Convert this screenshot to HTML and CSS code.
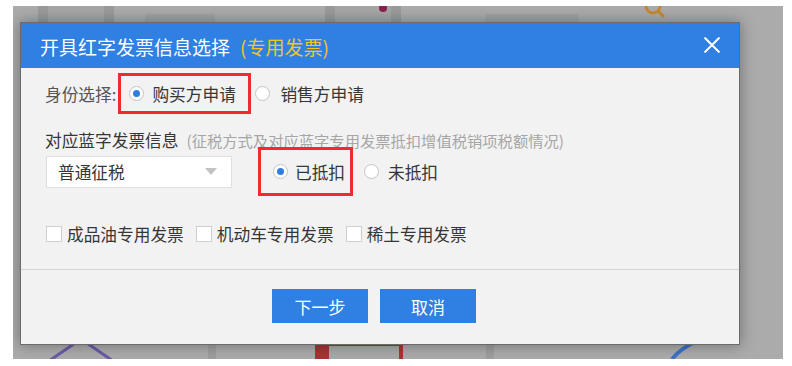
FILE: index.html
```html
<!DOCTYPE html>
<html lang="zh-CN">
<head>
<meta charset="utf-8">
<title>开具红字发票信息选择</title>
<link rel="stylesheet" href="styles.css">
</head>
<body>
<div class="backdrop">
  <div class="deco deco-card1"></div>
  <div class="deco deco-card2"><span class="deco-dot"></span></div>
  <div class="deco deco-shade1"></div>
  <div class="deco deco-shade2"></div>
  <div class="deco deco-bar1"></div>
  <div class="deco deco-bar2"></div>
  <div class="deco deco-red"><div class="deco-red-inner"></div></div>
  <svg class="deco deco-tri" width="80" height="20" viewBox="0 0 80 20"><path d="M8 20 L40 -2 L72 20" fill="none" stroke="#6a5aa8" stroke-width="3"/></svg>
  <svg class="deco deco-arrow" width="40" height="20" viewBox="0 0 40 20"><path d="M4 20 Q14 8 30 2" fill="none" stroke="#3a72c8" stroke-width="4"/></svg>
  <svg class="deco deco-q" width="30" height="18" viewBox="0 0 30 18"><circle cx="12" cy="2" r="7" fill="none" stroke="#c68a2c" stroke-width="3"/><path d="M17 7 L23 13" stroke="#c68a2c" stroke-width="3"/></svg>

  <div class="dialog">
    <div class="titlebar">
      <span class="title">开具红字发票信息选择<span class="title-sub">(专用发票)</span></span>
      <svg class="close" width="18" height="16" viewBox="0 0 18 16"><path d="M1.5 0.5 L16.5 15.5 M16.5 0.5 L1.5 15.5" stroke="#ffffff" stroke-width="2"/></svg>
    </div>
    <div class="content">
      <div class="row row-identity">
        <span class="label">身份选择:</span>
        <span class="highlight hl-buyer">
          <span class="radio checked"></span>
          <span class="opt-text">购买方申请</span>
        </span>
        <span class="radio radio-seller"></span>
        <span class="opt-text">销售方申请</span>
      </div>
      <div class="row row-info">
        <span class="info-title">对应蓝字发票信息</span>
        <span class="info-hint">(征税方式及对应蓝字专用发票抵扣增值税销项税额情况)</span>
      </div>
      <div class="row row-tax">
        <div class="select">
          <span>普通征税</span>
          <span class="caret"></span>
        </div>
        <span class="highlight hl-deduct">
          <span class="radio checked"></span>
          <span class="opt-text">已抵扣</span>
        </span>
        <span class="radio radio-undeduct"></span>
        <span class="opt-text">未抵扣</span>
      </div>
      <div class="row row-checks">
        <span class="check"></span><span class="check-text">成品油专用发票</span>
        <span class="check"></span><span class="check-text">机动车专用发票</span>
        <span class="check"></span><span class="check-text">稀土专用发票</span>
      </div>
    </div>
    <div class="footer">
      <button class="btn">下一步</button>
      <button class="btn">取消</button>
    </div>
  </div>
</div>
</body>
</html>
```

FILE: styles.css
```css
html, body {
  margin: 0;
  padding: 0;
  background: #ffffff;
}

body {
  font-family: "Noto Sans CJK SC", "Microsoft YaHei", sans-serif;
}

.backdrop {
  position: relative;
  margin: 6px 0 0 13px;
  width: 770px;
  height: 353px;
  background: #ababab;
  padding: 16px 0 0 7px;
  box-sizing: border-box;
  overflow: hidden;
}

.deco {
  position: absolute;
}

.deco-card1 {
  left: 25px;
  top: -2px;
  width: 76px;
  height: 18px;
  border-left: 10px solid #9a9a9a;
  border-right: 10px solid #9a9a9a;
  background: #a6a6a6;
  box-sizing: border-box;
}

.deco-card2 {
  left: 312px;
  top: -2px;
  width: 76px;
  height: 18px;
  border-left: 10px solid #9a9a9a;
  border-right: 10px solid #9a9a9a;
  background: #a6a6a6;
  box-sizing: border-box;
}

.deco-dot {
  position: absolute;
  right: 4px;
  top: 0;
  width: 8px;
  height: 8px;
  border-radius: 50%;
  background: #8a2050;
}

.deco-shade1 {
  left: 132px;
  top: 8px;
  width: 70px;
  height: 10px;
  background: #a2a2a2;
}

.deco-shade2 {
  left: 472px;
  top: 8px;
  width: 94px;
  height: 10px;
  background: #a2a2a2;
}

.deco-bar1 {
  left: 195px;
  top: 330px;
  width: 8px;
  height: 30px;
  background: #9e9e9e;
}

.deco-bar2 {
  left: 473px;
  top: 330px;
  width: 8px;
  height: 30px;
  background: #9e9e9e;
}

.deco-red {
  left: 302px;
  top: 336px;
  width: 88px;
  height: 24px;
  background: #a83434;
  padding: 4px 4px 0 14px;
  box-sizing: border-box;
}

.deco-red-inner {
  height: 20px;
  background: #a9a9a9;
}

.deco-tri {
  left: 28px;
  top: 335px;
}

.deco-arrow {
  left: 655px;
  top: 333px;
}

.deco-q {
  left: 628px;
  top: -2px;
}

.dialog {
  position: relative;
  width: 720px;
  height: 323px;
  border: 1px solid #6b6b6b;
  background: #f2f2f2;
  box-sizing: border-box;
  box-shadow: 0 0 14px rgba(0, 0, 0, 0.35);
  display: flex;
  flex-direction: column;
}

.titlebar {
  height: 45px;
  background: #2f80e2;
  display: flex;
  align-items: center;
  padding: 3px 18px 0 19px;
  box-sizing: border-box;
  flex: none;
}

.title {
  color: #ffffff;
  font-size: 19px;
  line-height: 24px;
  white-space: nowrap;
}

.title-sub {
  color: #f5c52a;
  margin-left: 10px;
}

.close {
  margin-left: auto;
  margin-top: -5px;
}

.content {
  height: 201px;
  padding: 5px 0 0 24px;
  box-sizing: border-box;
  flex: none;
  color: #363636;
  font-size: 16.7px;
}

.row {
  display: flex;
  align-items: center;
  white-space: nowrap;
}

.row-identity {
  height: 41px;
}

.label {
  color: #555555;
}

.highlight {
  display: flex;
  align-items: center;
  border: 3px solid #ef2b2b;
  box-sizing: border-box;
}

.hl-buyer {
  height: 41px;
  width: 133px;
  padding-left: 8px;
  margin-left: 2px;
}

.hl-buyer .opt-text {
  margin-left: 8px;
}

.radio {
  width: 15px;
  height: 15px;
  border: 1px solid #c4c4c4;
  border-radius: 50%;
  background: #ffffff;
  box-sizing: border-box;
  display: inline-flex;
  align-items: center;
  justify-content: center;
  flex: none;
}

.radio.checked::after {
  content: "";
  width: 7px;
  height: 7px;
  border-radius: 50%;
  background: #2f7fe0;
}

.radio-seller {
  margin-left: 4px;
  margin-right: 10px;
}

.row-info {
  height: 14px;
  margin-top: 19px;
  line-height: 14px;
}

.info-hint {
  color: #a6a6a6;
  font-size: 15.3px;
  margin-left: 8px;
}

.row-tax {
  height: 49px;
}

.select {
  width: 186px;
  height: 32px;
  margin-left: 1px;
  background: #ffffff;
  border: 1px solid #e0e0e0;
  box-sizing: border-box;
  display: flex;
  align-items: center;
  padding-left: 11px;
  padding-right: 14px;
}

.caret {
  margin-left: auto;
  width: 0;
  height: 0;
  border-left: 6px solid transparent;
  border-right: 6px solid transparent;
  border-top: 7px solid #c2c2c2;
}

.hl-deduct {
  height: 49px;
  width: 95px;
  margin-left: 26px;
  padding-left: 12px;
}

.hl-deduct .opt-text {
  margin-left: 7px;
}

.radio-undeduct {
  margin-left: 11px;
  margin-right: 9px;
}

.row-checks {
  height: 24px;
  margin-top: 26px;
}

.check {
  width: 16px;
  height: 16px;
  margin-left: 1px;
  background: #ffffff;
  border: 1px solid #cfcfcf;
  box-sizing: border-box;
  flex: none;
}

.check-text {
  margin-left: 5px;
  margin-right: 11px;
}

.footer {
  flex: 1;
  border-top: 1px solid #d6d6d6;
  display: flex;
  align-items: flex-start;
  padding: 19px 0 0 251px;
  box-sizing: border-box;
}

.btn {
  width: 96px;
  height: 34px;
  border: none;
  background: #2f80e2;
  color: #ffffff;
  font-family: "Noto Sans CJK SC", "Microsoft YaHei", sans-serif;
  font-size: 17px;
  margin-right: 12px;
  padding: 0;
  cursor: pointer;
}
```
